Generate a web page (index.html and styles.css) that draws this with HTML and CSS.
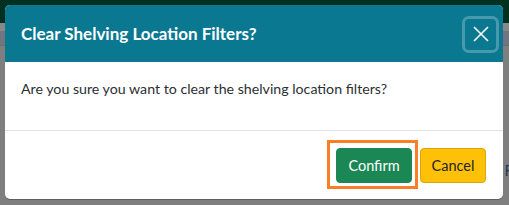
FILE: index.html
```html
<!DOCTYPE html>
<html>
<head>
  <link rel="stylesheet" href="styles.css">
</head>
<body>
  <div class="page">
    <div class="navbar"></div>
    <div class="toolbar"></div>
    <div class="content">
      <span class="peek">F</span>
    </div>
  </div>

  <!-- Confirm dialog -->
  <div class="modal">
    <div class="modal-header">
      <h5 class="modal-title">Clear Shelving Location Filters?</h5>
      <button class="btn-close" aria-label="Close">
        <svg width="16" height="16" viewBox="0 0 16 16">
          <path d="M1 1 L15 15 M15 1 L1 15" stroke="#fff" stroke-width="1.6" fill="none"/>
        </svg>
      </button>
    </div>
    <div class="modal-body">
      <p>Are you sure you want to clear the shelving location filters?</p>
    </div>
    <div class="modal-footer">
      <button class="btn btn-confirm highlighted">Confirm</button>
      <button class="btn btn-cancel">Cancel</button>
    </div>
  </div>
</body>
</html>
```

FILE: styles.css
```css
body {
  margin: 0;
  font-family: Lato, 'Open Sans', Arial, sans-serif;
  background-color: #7f7f7f;
  width: 509px;
  height: 205px;
  overflow: hidden;
  position: relative;
}
.page {
  height: 205px;
}
.navbar {
  height: 23px;
  background-color: #00301f;
}
.toolbar {
  height: 22px;
  background-color: #717582;
  border-top: 8px solid #88888c;
  box-sizing: border-box;
}
.content {
  height: 160px;
  background-color: #7f7f7f;
  border-top: 1px solid #6e6e6e;
  position: relative;
}
.peek {
  position: absolute;
  right: -4px;
  top: 115px;
  color: #1d3a5a;
  font-size: 15px;
}

.modal {
  position: absolute;
  left: 5px;
  top: 5px;
  width: 498px;
  background: white;
  border-radius: 5px;
  overflow: hidden;
  box-shadow: 0 1px 0 rgba(0,0,0,0.25);
}
.modal-header {
  height: 57px;
  background-color: #0a7891;
  display: flex;
  justify-content: space-between;
  align-items: center;
  padding: 0 7px 0 16px;
  box-sizing: border-box;
}
.modal-title {
  margin: 0;
  color: white;
  font-size: 17px;
  font-weight: 700;
}
.btn-close {
  width: 31px;
  height: 31px;
  padding: 0;
  border: none;
  border-radius: 4px;
  background: transparent;
  box-shadow: 0 0 0 3px rgba(255,255,255,0.25);
  display: flex;
  align-items: center;
  justify-content: center;
  margin-top: 1px;
}
.modal-body {
  padding: 16px 16px 30px;
}
.modal-body p {
  margin: 0;
  font-size: 14.2px;
  line-height: 22px;
  color: #2b2f33;
}
.modal-footer {
  border-top: 1px solid #dee2e6;
  display: flex;
  justify-content: flex-end;
  gap: 8px;
  padding: 17px 17px 16px;
}
.btn {
  height: 35px;
  padding: 0 10px;
  border-radius: 4px;
  font-family: inherit;
  font-size: 14.5px;
  cursor: pointer;
}
.btn-confirm {
  width: 76px;
  background-color: #1b8754;
  border: 1px solid #1b8754;
  color: white;
}
.btn-cancel {
  width: 66px;
  background-color: #ffc107;
  border: 1px solid #d9a406;
  color: #212529;
}
.highlighted {
  position: relative;
}
.highlighted::after {
  content: "";
  position: absolute;
  left: -10px;
  right: -7px;
  top: -9px;
  bottom: -7px;
  border: 3px solid #f97f27;
}
```
